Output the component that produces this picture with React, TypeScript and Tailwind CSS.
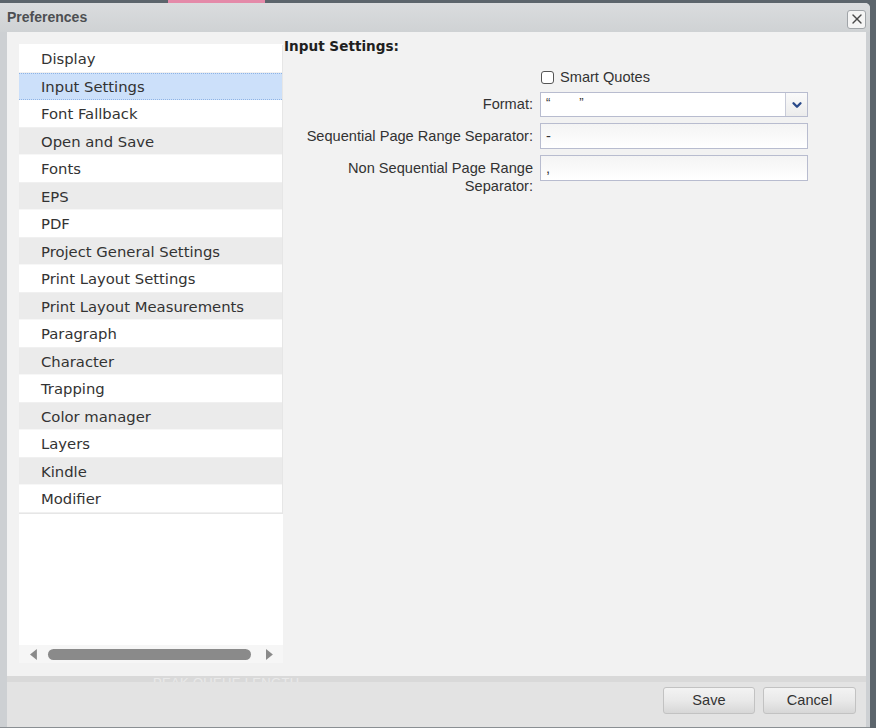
import { ChevronDown, X } from "lucide-react";

const items = [
  "Display",
  "Input Settings",
  "Font Fallback",
  "Open and Save",
  "Fonts",
  "EPS",
  "PDF",
  "Project General Settings",
  "Print Layout Settings",
  "Print Layout Measurements",
  "Paragraph",
  "Character",
  "Trapping",
  "Color manager",
  "Layers",
  "Kindle",
  "Modifier",
];

function NavList() {
  return (
    <div className="flex flex-col border-r border-b border-[#e6e6e6] mt-[1px]">
      {items.map((label, i) => {
        const selected = label === "Input Settings";
        const odd = i % 2 === 1;
        let cls = "bg-white border-[#f0f0f0]";
        if (odd) cls = "bg-[#ebebeb] border-[#f7f7f7]";
        if (selected) cls = "bg-[#cce0fa] border-dotted border-[#8fb4e6]";
        return (
          <div
            key={label}
            className={`h-[27.5px] flex items-center pl-[22px] pt-[2px] text-[14.8px] text-[#333] border-b ${cls} ${selected ? "border-t" : ""}`}
            style={{ fontFamily: "'DejaVu Sans', Verdana, sans-serif" }}
          >
            {label}
          </div>
        );
      })}
    </div>
  );
}

export default function App() {
  const sans = { fontFamily: "'Liberation Sans', Arial, sans-serif" };
  return (
    <div className="w-[876px] h-[728px] bg-[#5c656c] flex flex-col overflow-hidden">
      {/* page behind the dialog */}
      <div className="h-[3px] flex shrink-0">
        <div className="ml-[168px] w-[97px] bg-[#e48aa9]" />
      </div>

      <div className="flex flex-1 min-h-0">
        <div className="w-[870px] flex flex-col bg-[#cdd0d3] rounded-tr-[5px] border-b border-[#8a8f93]">
          {/* Title bar */}
          <div className="h-[29px] shrink-0 flex items-center justify-between pl-[7px] pr-[4px] bg-gradient-to-b from-[#dadcde] to-[#cfd2d4] rounded-tr-[5px]">
            <span className="text-[14px] font-bold text-[#4d4f52]" style={sans}>
              Preferences
            </span>
            <div className="w-[19px] h-[19px] mt-[3px] rounded-[3px] border border-[#a0a4a8] bg-[#f4f4f4] flex items-center justify-center">
              <X className="w-[16px] h-[16px] text-[#4a4a4a]" strokeWidth={2} />
            </div>
          </div>

          {/* Body */}
          <div className="flex-1 min-h-0 mx-[7px] mr-[4px] bg-[#f2f2f2] flex pt-[12px] pl-[12px] pb-[13px]">
            {/* Left list panel */}
            <div className="w-[264px] bg-white flex flex-col">
              <NavList />
              <div className="flex-1" />
              <div className="h-[18px] bg-[#f6f6f6] flex items-center pl-[11px] pr-[10px] gap-[10px] mb-0">
                <svg width="8" height="11" viewBox="0 0 8 11">
                  <path d="M7 0 L0 5.5 L7 11 Z" fill="#8a8a8a" />
                </svg>
                <div className="w-[206px] h-[11px] rounded-full bg-[#8a8a8a]" />
                <svg width="8" height="11" viewBox="0 0 8 11" className="ml-[4px]">
                  <path d="M1 0 L8 5.5 L1 11 Z" fill="#8a8a8a" />
                </svg>
              </div>
            </div>

            {/* Right settings pane */}
            <div className="flex-1 pl-[1px] -mt-[6px]" style={sans}>
              <div
                className="text-[13.6px] font-bold text-[#1f1f1f] leading-[16px]"
                style={{ fontFamily: "'DejaVu Sans', Verdana, sans-serif" }}
              >
                Input Settings:
              </div>
              <div className="grid grid-cols-[249px_268px] gap-x-[7px] gap-y-[6px] mt-[15px] text-[14.6px] text-[#333]">
                <div />
                <label className="flex items-center gap-[6px] h-[17px]">
                  <span className="w-[13px] h-[13px] rounded-[3px] border border-[#555] bg-white ml-[1px]" />
                  <span>Smart Quotes</span>
                </label>

                <div className="text-right leading-[25px]">Format:</div>
                <div className="h-[25px] border border-[#b8bccf] bg-white flex">
                  <div className="flex-1 pl-[5px] text-[13px] leading-[20px] text-[#333]">
                    “&nbsp;&nbsp;&nbsp;&nbsp;&nbsp;&nbsp;&nbsp;&nbsp;”
                  </div>
                  <div className="w-[22px] border-l border-[#c8cbd8] bg-gradient-to-b from-[#fafafa] to-[#ececec] flex items-center justify-center">
                    <ChevronDown className="w-[14px] h-[14px] text-[#2a4a8a]" strokeWidth={4} />
                  </div>
                </div>

                <div className="text-right leading-[26px]">Sequential Page Range Separator:</div>
                <div className="h-[26px] border border-[#b8bccf] bg-gradient-to-b from-[#f4f4f4] to-white pl-[5px] leading-[24px]">
                  -
                </div>

                <div className="text-right leading-[18px] pt-[4px]">
                  Non Sequential Page Range
                  <br />
                  Separator:
                </div>
                <div className="h-[26px] border border-[#b8bccf] bg-gradient-to-b from-[#f4f4f4] to-white pl-[5px] leading-[24px]">
                  ,
                </div>
              </div>
            </div>
          </div>

          {/* Footer */}
          <div className="h-[51px] shrink-0 ml-[7px] mr-[4px] bg-[#dcdcdc] flex flex-col">
            <div className="h-[6px] bg-[#d9d9d9] flex">
              <div className="ml-[146px] text-[13px] leading-[14px] text-[#e9e9e9] tracking-wide" style={sans}>
                PEAK QUEUE LENGTH
              </div>
            </div>
            <div className="flex-1 bg-[#e3e3e3] flex items-start justify-end pt-[5px] pr-[10px] gap-[8px]">
              <button
                className="w-[92px] h-[27px] rounded-[3px] border border-[#c2c2c2] bg-gradient-to-b from-[#f3f3f3] via-[#e9e9e9] to-[#d7d7d7] text-[14.6px] text-[#333]"
                style={sans}
              >
                Save
              </button>
              <button
                className="w-[93px] h-[27px] rounded-[3px] border border-[#c2c2c2] bg-gradient-to-b from-[#f3f3f3] via-[#e9e9e9] to-[#d7d7d7] text-[14.6px] text-[#333]"
                style={sans}
              >
                Cancel
              </button>
            </div>
          </div>
        </div>
      </div>
    </div>
  );
}
